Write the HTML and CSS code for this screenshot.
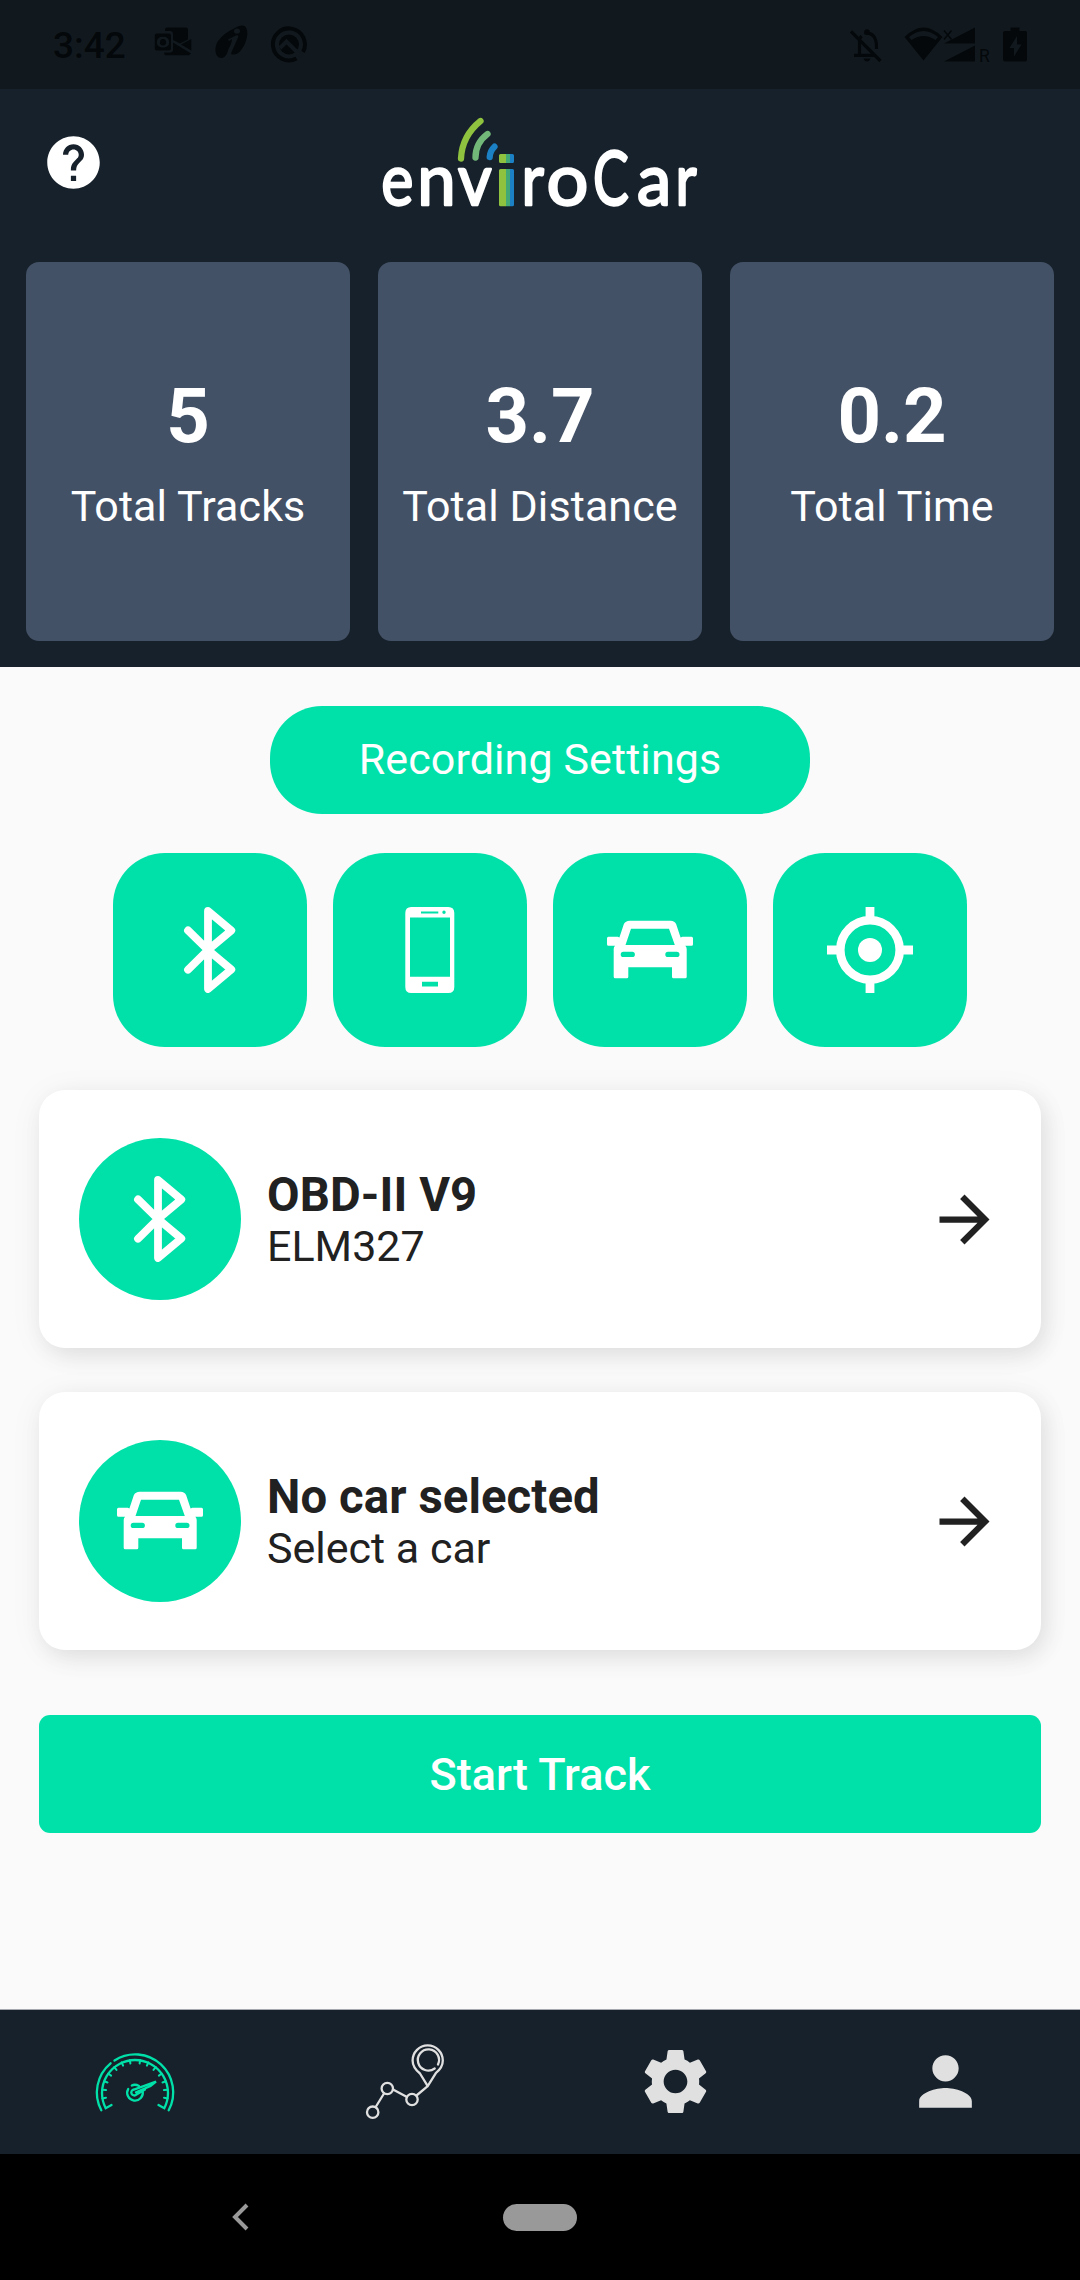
FILE: index.html
```html
<!DOCTYPE html>
<html lang="en">
<head>
<meta charset="utf-8">
<title>enviroCar</title>
<link rel="stylesheet" href="styles.css">
</head>
<body>
<svg class="defs" aria-hidden="true">
  <symbol id="bluetooth" viewBox="0 0 86 86">
    <path d="M21 23.4 41 43 64.3 62.6 41 82V4L64.3 23.4 41 43 21 62.7" fill="none" stroke="currentColor" stroke-width="7.8" stroke-linecap="round" stroke-linejoin="round"/>
  </symbol>
  <symbol id="car" viewBox="0 0 86 86">
    <path fill="currentColor" fill-rule="evenodd" d="M23 13.7H63.5Q67.8 13.7 69.2 17.3L73.6 30.4 75.5 29.7H84.5Q86 29.7 86 31.2V37.2Q86 38.7 84.5 38.7H78.3Q79.7 40 79.7 42V69.8Q79.7 71.3 78.2 71.3H66.5Q65 71.3 65 69.8V60.2H21.3V69.8Q21.3 71.3 19.8 71.3H8.2Q6.7 71.3 6.7 69.8V42Q6.7 40 8 38.7H1.5Q0 38.7 0 37.2V31.2Q0 29.7 1.5 29.7H10.8L12.4 30.4 16.8 17.3Q18.2 13.7 23 13.7ZM24 21.7 18.5 38.1H67.8L62 21.7ZM16.4 44.7A2.7 2.7 0 0 0 16.4 50.1H25.2A2.7 2.7 0 0 0 25.2 44.7ZM61 44.7A2.7 2.7 0 0 0 61 50.1H69.8A2.7 2.7 0 0 0 69.8 44.7Z"/>
  </symbol>
  <symbol id="arrow" viewBox="0 0 24 24">
    <path fill="currentColor" d="M12 4l-1.41 1.41L16.17 11H4v2h12.17l-5.58 5.59L12 20l8-8z"/>
  </symbol>
</svg>

<div class="screen">
  <div class="status">
    <span class="clock">3:42</span>
    <svg class="notifications" viewBox="0 0 156 40">
      <g fill="currentColor">
        <path d="M12 6V4.500Q12 2.500 14 2.500H33Q35 2.500 35 4.500V14.500L27 18.500 20 15V9Q20 6 17 6Z"/>
        <path d="M20 17.500 38 28.500 36 30.200H13Q11 30.200 11 27.500H17Q20 27.500 20 24.500ZM28 19.500 38.300 14V25.500Z"/>
        <path fill-rule="evenodd" d="M3.500 8.500H16Q18 8.500 18 10.500V23.500Q18 25.500 16 25.500H3.500Q1.800 25.500 1.800 23.500V10.500Q1.800 8.500 3.500 8.500ZM10 12A5 5.300 0 1 0 10 22.300 5 5.300 0 1 0 10 12ZM10 14A2.700 3.300 0 1 1 10 20.500 2.700 3.300 0 1 1 10 14Z"/>
        <path d="M81 3.500Q92-3 94 5C96 14 88 31 80 29.500Q77 30 79 26L85 12.500Q86 9.500 83 10.500L75 14.500 76 16 79 14Q79 18 75.500 24 74 31 69.500 33C61 34 61 22 65 16Q71 8 81 3.500Z"/>
        <circle cx="136" cy="19.500" r="10"/>
      </g>
      <ellipse class="cut" cx="84" cy="6" rx="3" ry="2.600"/>
      <path class="cutline" d="M127 23 133.500 16.500 149 32"/>
      <path d="M143.500 33.500A16 16 0 1 1 150 27" fill="none" stroke="currentColor" stroke-width="4"/>
    </svg>
    <svg class="indicators" viewBox="0 0 180 40">
      <g fill="none" stroke="currentColor" stroke-width="3.200">
        <path d="M1 6.500 30.500 36M4 30.300H24M9.500 30V16Q9.500 13 11.500 11M14.500 8Q26.500 7 26.500 22V24"/>
      </g>
      <g fill="currentColor">
        <circle cx="17" cy="7" r="2.800"/><path d="M13.500 33.500H20.500Q19.500 36.500 17 36.500T13.500 33.500Z"/>
        <path fill-rule="evenodd" d="M54.500 12Q73.500 -7 92.500 12L73.500 35.500ZM59 12 61.500 15Q73.500 7 85.500 15L88 12Q73.500 0 59 12Z"/>
        <path d="M94 18.500 125 2.500V18.500ZM94 36.500 125 20.500V36.500Z"/>
        <path fill-rule="evenodd" d="M160.500 2.500H169.500V6H175.500Q177 6 177 7.500V34.500Q177 36.500 175.500 36.500H155Q153 36.500 153 34.500V7.500Q153 6 155 6H160.500ZM167 11 159.500 23H164V31.500L171.500 19.500H167Z"/>
      </g>
      <path d="M94 5.500 101.500 14.500M101.500 5.500 94 14.500" stroke="currentColor" stroke-width="1.500"/>
      <text class="roaming" x="129" y="36.500">R</text>
    </svg>
  </div>

  <header class="hero">
    <div class="brandbar">
      <svg class="help" viewBox="0 0 24 24"><path fill="currentColor" d="M12 2C6.480 2 2 6.480 2 12s4.480 10 10 10 10-4.480 10-10S17.520 2 12 2zm1 17h-2v-2h2v2zm2.070-7.750l-.9.920C13.450 12.900 13 13.500 13 15h-2v-.5c0-1.100.45-2.100 1.170-2.830l1.240-1.260c.37-.36.59-.86.59-1.410 0-1.100-.9-2-2-2s-2 .9-2 2H8c0-2.210 1.790-4 4-4s4 1.790 4 4c0 .88-.36 1.680-.93 2.250z"/></svg>
      <svg class="logo" viewBox="0 0 360 130" role="img" aria-label="enviroCar">
        <g fill="none" stroke-width="6.300" stroke-linecap="round">
          <path d="M101 58.500Q102 36 120.500 21" stroke="#8fc23f"/>
          <path d="M115.500 57.500Q115.500 43 127.500 34" stroke="#72b879"/>
          <path d="M129.700 57Q130 51 134.500 46.700" stroke="#1b80c4"/>
        </g>
        <clipPath id="bars"><rect x="139" y="54" width="15" height="9" rx="1.500"/><rect x="139" y="69" width="15" height="37.300" rx="1.500"/></clipPath>
        <g clip-path="url(#bars)">
          <rect x="139" y="50" width="7" height="60" fill="#8fc23f"/><rect x="146" y="50" width="4" height="60" fill="#41a878"/><rect x="150" y="50" width="4" height="60" fill="#1b80c4"/>
        </g>
        <g class="wordmark">
          <text transform="translate(21.200 105.300) scale(.84 1)">e</text>
          <text transform="translate(57.200 105.300) scale(.95 1)">n</text>
          <text transform="translate(98 105.300) scale(.9 1)">v</text>
          <text transform="translate(161.500 105.300) scale(.85 1)">r</text>
          <text transform="translate(186.500 105.300) scale(1.020 1)">o</text>
          <text class="cap" transform="translate(233 105.300) scale(.71 1)">C</text>
          <text transform="translate(277 105.300) scale(.95 1)">a</text>
          <text transform="translate(315.500 105.300) scale(.8 1)">r</text>
        </g>
      </svg>
    </div>
    <div class="stats">
      <div class="stat"><b class="value">5</b><span class="label">Total Tracks</span></div>
      <div class="stat"><b class="value">3.7</b><span class="label">Total Distance</span></div>
      <div class="stat"><b class="value">0.2</b><span class="label">Total Time</span></div>
    </div>
  </header>

  <main class="content">
    <div class="pill">Recording Settings</div>
    <div class="tiles">
      <div class="tile"><svg class="icon"><use href="#bluetooth"/></svg></div>
      <div class="tile">
        <svg class="icon" viewBox="0 0 86 86"><path fill="currentColor" fill-rule="evenodd" d="M24.300 0H61.300Q67.300 0 67.300 6V80Q67.300 86 61.300 86H24.300Q18.300 86 18.300 80V6Q18.300 0 24.300 0ZM23 10.500V69.700H63V10.500ZM34 4.600V6.400H51.300V4.600ZM57 3.500A1.700 1.700 0 1 0 57 6.900 1.700 1.700 0 1 0 57 3.500ZM35 74.700V79.500H51V74.700Z"/></svg>
      </div>
      <div class="tile"><svg class="icon"><use href="#car"/></svg></div>
      <div class="tile">
        <svg class="icon" viewBox="0 0 86 86"><circle cx="43" cy="43" r="29.700" fill="none" stroke="currentColor" stroke-width="8.600"/><circle cx="43" cy="43" r="12" fill="currentColor"/><path d="M43 0V11M43 75V86M0 43H11M75 43H86" stroke="currentColor" stroke-width="8.800"/></svg>
      </div>
    </div>

    <div class="card">
      <div class="badge"><svg class="icon"><use href="#bluetooth"/></svg></div>
      <div class="info"><b class="title">OBD-II V9</b><span class="subtitle">ELM327</span></div>
      <svg class="arrow"><use href="#arrow"/></svg>
    </div>
    <div class="card">
      <div class="badge"><svg class="icon"><use href="#car"/></svg></div>
      <div class="info"><b class="title">No car selected</b><span class="subtitle">Select a car</span></div>
      <svg class="arrow"><use href="#arrow"/></svg>
    </div>

    <button class="start">Start Track</button>
  </main>

  <nav class="tabs">
    <svg class="tab active" viewBox="0 0 90 90" fill="none" stroke="currentColor" stroke-width="2.300" stroke-linecap="round">
      <path d="M11.300 73.300A38 38 0 0 1 20.600 26.300M24.500 23.500A38 38 0 0 1 78.700 73.300"/>
      <path d="M21.500 68 15.700 71.200A33 33 0 1 1 74.300 71.200L68.500 68"/>
      <g class="ticks">
        <path d="M12.300 61.400 16 60.700M12.300 52.800 16 53.100M14.200 44.300 17.500 45.500M18.200 36.500 21.100 38.600M24.200 30.100 26.500 32.900M31.600 25.400 33.100 28.700M39.800 22.900 40.400 26.500"/>
        <path d="M77.700 61.400 74 60.700M77.700 52.800 74 53.100M75.800 44.300 72.500 45.500M71.800 36.500 68.900 38.600M65.800 30.100 63.500 32.900M58.400 25.400 56.900 28.700M50.200 22.900 49.600 26.500"/>
      </g>
      <path d="M41.800 48.500Q45 46.800 49 49M38.200 52A7.800 7.800 0 1 0 52.600 54"/>
      <path d="M46.500 57.500A3 3 0 1 1 44 52.500L66 44.600 60.500 49 46 55.300M46.500 57.500 55 52.500"/>
    </svg>
    <svg class="tab" viewBox="0 1 90 90" fill="none" stroke="currentColor" stroke-width="2.300" stroke-linecap="round" stroke-linejoin="round">
      <circle cx="12.700" cy="76.200" r="5.700"/><circle cx="27.300" cy="52.500" r="5.700"/><circle cx="52" cy="63.500" r="5.700"/>
      <path d="M15.700 71 24 57.500M33 53.500 47 61M56.500 59.500 67.700 50.200 76 36.800Q82.800 31.500 82.800 24.500A15.100 15.100 0 1 0 52.600 24.500Q52.600 31.500 60 37.500L67.700 50.200"/>
      <path d="M78 28.500A10.600 10.600 0 1 0 74.700 32.500"/>
    </svg>
    <svg class="tab gear" viewBox="0 0 24 24"><path fill="currentColor" d="M19.140 12.940c.04-.3.060-.61.060-.94 0-.32-.02-.64-.07-.94l2.030-1.580c.18-.14.23-.41.120-.61l-1.920-3.320c-.12-.22-.37-.29-.59-.22l-2.390.96c-.5-.38-1.030-.7-1.620-.94l-.36-2.540c-.04-.24-.24-.41-.48-.41h-3.840c-.24 0-.43.17-.47.41l-.36 2.540c-.59.24-1.130.57-1.620.94l-2.390-.96c-.22-.08-.47 0-.59.22L2.740 8.870c-.12.21-.08.47.12.61l2.030 1.580c-.05.3-.09.63-.09.94s.02.64.07.94l-2.030 1.580c-.18.14-.23.41-.12.61l1.920 3.320c.12.22.37.29.59.22l2.390-.96c.5.38 1.030.7 1.620.94l.36 2.540c.05.24.24.41.48.41h3.840c.24 0 .44-.17.47-.41l.36-2.540c.59-.24 1.130-.56 1.620-.94l2.390.96c.22.080.47 0 .59-.22l1.920-3.320c.12-.22.070-.47-.12-.61l-2.010-1.580zM12 15.600c-1.980 0-3.600-1.620-3.600-3.600s1.620-3.600 3.600-3.600 3.600 1.620 3.600 3.600-1.620 3.600-3.600 3.600z"/></svg>
    <svg class="tab person" viewBox="0 0 24 24"><path fill="currentColor" d="M12 12c2.210 0 4-1.790 4-4s-1.790-4-4-4-4 1.790-4 4 1.790 4 4 4zm0 2c-2.670 0-8 1.340-8 4v2h16v-2c0-2.660-5.330-4-8-4z"/></svg>
  </nav>

  <div class="system">
    <svg class="back" viewBox="0 0 20 30"><path d="M17 3 5 15 17 27" fill="none" stroke="currentColor" stroke-width="4"/></svg>
    <div class="home"></div>
  </div>
</div>
</body>
</html>
```
FILE: styles.css
```css
* { box-sizing: border-box; }
body { margin: 0; font-family: Roboto, "Liberation Sans", sans-serif; }
svg { display: block; flex: none; }
.defs { position: absolute; width: 0; height: 0; }

.screen {
  display: flex;
  flex-direction: column;
  width: 1080px;
  height: 2280px;
  background: #fafafa;
  color: #212121;
}

.status {
  display: flex;
  align-items: center;
  height: 89px;
  padding: 0 50px 0 53px;
  background: #11191f;
  color: #04080a;
}
.clock { width: 100px; padding-top: 3px; font-size: 37px; font-weight: 500; line-height: 44px; }
.notifications { width: 156px; height: 40px; }
.indicators { width: 180px; height: 40px; margin-left: auto; }
.roaming { font-size: 17.5px; fill: currentColor; }
.cut { fill: #11191f; }
.cutline { fill: none; stroke: #11191f; stroke-width: 4px; }

.hero {
  display: flex;
  flex-direction: column;
  height: 578px;
  padding: 0 26px 26px;
  background: #17212b;
  color: #fff;
}
.brandbar { display: grid; grid-template-columns: 334px 360px 1fr; height: 173px; padding-top: 11px; }
.help { width: 63px; height: 63px; margin: 31px 0 0 16px; }
.logo { width: 360px; height: 130px; }
.wordmark {
  font-family: Lato, sans-serif;
  font-size: 72.5px;
  fill: #fff;
  stroke: #fff;
  stroke-width: 2.4px;
  stroke-linejoin: round;
}
.cap { font-size: 75.5px; }

.stats { display: grid; grid-template-columns: repeat(3, 1fr); gap: 28px; flex: 1; }
.stat {
  display: flex;
  flex-direction: column;
  align-items: center;
  justify-content: center;
  gap: 21px;
  padding-bottom: 2px;
  border-radius: 13px;
  background: #435166;
}
.value { font-size: 76px; line-height: 90px; }
.label { font-size: 43px; line-height: 49px; letter-spacing: .1px; }

.content { display: flex; flex-direction: column; flex: 1; padding: 39px 39px 0; }
.pill {
  align-self: center;
  width: 540px;
  height: 108px;
  border-radius: 52px;
  background: #00e1a9;
  color: #fff;
  font-size: 43px;
  letter-spacing: .1px;
  line-height: 106px;
  text-align: center;
}
.tiles { display: flex; justify-content: center; gap: 26px; margin: 39px 0 43px; }
.tile {
  display: grid;
  place-items: center;
  width: 194px;
  height: 194px;
  border-radius: 52px;
  background: #00e1a9;
  color: #fff;
}
.icon { width: 86px; height: 86px; }

.card {
  display: flex;
  align-items: center;
  gap: 26px;
  height: 258px;
  margin-bottom: 44px;
  padding: 0 39px 0 40px;
  border-radius: 26px;
  background: #fff;
  box-shadow: 6px 8px 22px rgba(0, 0, 0, .08), 0 4px 34px rgba(0, 0, 0, .05);
}
.badge {
  display: grid;
  place-items: center;
  width: 162px;
  height: 162px;
  border-radius: 50%;
  background: #00e1a9;
  color: #fff;
}
.info { display: flex; flex-direction: column; flex: 1; padding-top: 1px; }
.title { font-size: 47.25px; line-height: 54px; letter-spacing: .1px; }
.subtitle { font-size: 43px; line-height: 49px; }
.arrow { width: 75px; height: 75px; }

.start {
  height: 118px;
  margin-top: 21px;
  padding: 0;
  border: 0;
  border-radius: 11px;
  background: #00e1a9;
  color: #fff;
  font: 500 45px/119px Roboto, "Liberation Sans", sans-serif;
}

.tabs {
  display: grid;
  grid-template-columns: repeat(4, 1fr);
  place-items: center;
  height: 145px;
  padding-bottom: 1px;
  border-top: 1px solid #a5a9ad;
  background: #17212b;
  color: #e0e0e0;
}
.tab { width: 90px; height: 90px; }
.tab.active { color: #00e1a9; }
.ticks { stroke-width: 2; }
.tab.gear, .tab.person { width: 79px; height: 79px; }

.system {
  display: grid;
  grid-template-columns: 1fr 74px 1fr;
  align-items: center;
  height: 126px;
  background: #000;
  color: #999;
}
.back { width: 20px; height: 30px; margin-left: 230px; }
.home { height: 27px; border-radius: 14px; background: #999; }
```
